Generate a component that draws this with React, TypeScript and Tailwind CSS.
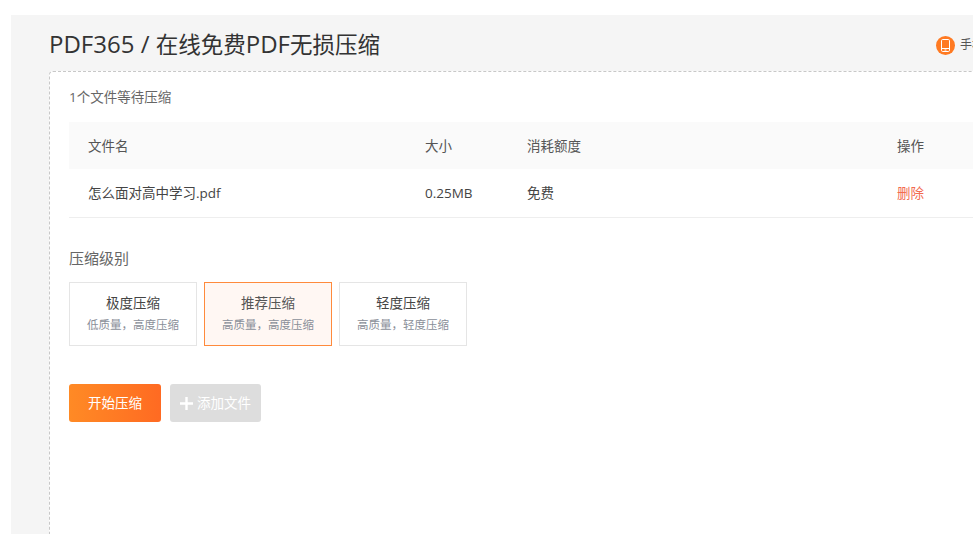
const FONT = "font-['Open_Sans','Noto_Sans_CJK_SC',sans-serif]";

const levels = [
  { name: "极度压缩", desc: "低质量，高度压缩", active: false },
  { name: "推荐压缩", desc: "高质量，高度压缩", active: true },
  { name: "轻度压缩", desc: "高质量，轻度压缩", active: false },
];

function PhoneIcon() {
  return (
    <span className="flex h-[19px] w-[19px] shrink-0 items-center justify-center rounded-full bg-[#ff7a22]">
      <svg width="11" height="13" viewBox="0 0 11 13" fill="none">
        <rect x="1.5" y="0.5" width="8" height="12" rx="1.2" stroke="#fff" strokeWidth="1" />
        <path d="M1.5 9.5h8" stroke="#fff" strokeWidth="1" />
        <path d="M4.5 11h2" stroke="#fff" strokeWidth="1" />
      </svg>
    </span>
  );
}

function LevelCard({ name, desc, active }: { name: string; desc: string; active: boolean }) {
  return (
    <div
      className={
        active
          ? "flex h-[64px] w-[128px] flex-col items-center border border-[#ff8a3c] bg-[#fff7f3] pt-[10px]"
          : "flex h-[64px] w-[128px] flex-col items-center border border-[#e5e5e5] bg-white pt-[10px]"
      }
    >
      <div className={active ? "text-[13.5px] leading-[20px] text-[#555]" : "text-[13.5px] leading-[20px] text-[#444]"}>{name}</div>
      <div className="mt-[3px] text-[11.5px] leading-[18px] text-[#8a8f99]">{desc}</div>
    </div>
  );
}

export default function App() {
  return (
    <div className={`h-[534px] w-[973px] overflow-hidden bg-white pl-[11px] pt-[15px] ${FONT}`}>
      <div className="h-[519px] w-[1100px] bg-[#f5f5f5] pl-[38px]">
        {/* Title row */}
        <div className="flex h-[56px] items-center">
          <h1 className="w-[887px] pt-[2px] text-[24px] font-normal leading-[32px] text-[#333]">
            PDF365 / <span className="text-[22.5px]">在线免费</span>PDF<span className="text-[22.5px]">无损压缩</span>
          </h1>
          <div className="flex items-center pt-[4px]">
            <PhoneIcon />
            <span className="ml-[5px] text-[12px] text-[#555]">手机版</span>
          </div>
        </div>

        {/* Main card */}
        <div className="h-[480px] w-[1040px] rounded-[4px] border border-dashed border-[#c8c8c8] bg-white pl-[19px] pt-[15px]">
          <div className="text-[13.5px] leading-[20px] text-[#666]">1个文件等待压缩</div>

          {/* File table */}
          <div className="mt-[15px]">
            <div className="flex h-[47px] items-center bg-[#fafafa] pl-[19px] pt-[1px] text-[13.5px] text-[#555]">
              <span className="w-[337px]">文件名</span>
              <span className="w-[102px]">大小</span>
              <span className="w-[370px]">消耗额度</span>
              <span>操作</span>
            </div>
            <div className="flex h-[49px] items-center border-b border-[#eeeeee] pl-[19px] text-[13.5px] text-[#444]">
              <span className="w-[337px]">怎么面对高中学习.pdf</span>
              <span className="w-[102px]">0.25MB</span>
              <span className="w-[370px]">免费</span>
              <span className="text-[#f26a50]">删除</span>
            </div>
          </div>

          {/* Compression level */}
          <div className="mt-[29px] text-[15px] leading-[22px] text-[#666]">压缩级别</div>
          <div className="mt-[13px] flex gap-[7px]">
            {levels.map((l) => (
              <LevelCard key={l.name} {...l} />
            ))}
          </div>

          {/* Actions */}
          <div className="mt-[38px] flex gap-[9px]">
            <button className="h-[38px] w-[92px] rounded-[3px] bg-gradient-to-r from-[#ff8a25] to-[#ff6a22] pt-[1px] text-[13.5px] text-white">
              开始压缩
            </button>
            <button className="flex h-[38px] w-[91px] items-center justify-center gap-[4px] rounded-[3px] bg-[#dddddd] pt-[1px] text-[13.5px] text-white">
              <svg width="13" height="13" viewBox="0 0 13 13" fill="#fff">
                <path d="M5.3 0h2.4v5.3H13v2.4H7.7V13H5.3V7.7H0V5.3h5.3z" />
              </svg>
              添加文件
            </button>
          </div>
        </div>
      </div>
    </div>
  );
}
